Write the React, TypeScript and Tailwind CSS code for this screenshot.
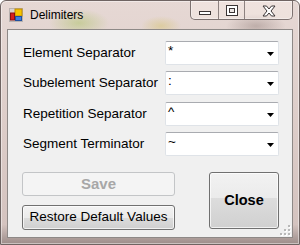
import React from "react";

const rows = [
  { label: "Element Separator", value: "*", mt: "mt-0" },
  { label: "Subelement Separator", value: ":", mt: "mt-[6px]" },
  { label: "Repetition Separator", value: "^", mt: "mt-[7px]" },
  { label: "Segment Terminator", value: "~", mt: "mt-[6px]" },
];

function AppIcon() {
  return (
    <svg width="14" height="14" viewBox="0 0 14 14">
      <rect x="0.5" y="0.5" width="13" height="13" fill="#d9d4d2" stroke="#b8b2b0" />
      <rect x="6" y="1" width="7" height="7" fill="#f5c400" stroke="#c08a00" strokeWidth="1" />
      <rect x="1.5" y="5" width="4" height="7" fill="#d62020" stroke="#8a1010" strokeWidth="1" />
      <rect x="6.5" y="8.5" width="6" height="4" fill="#3f7fe0" stroke="#2050a0" strokeWidth="1" />
    </svg>
  );
}

function CaptionButtons() {
  return (
    <div className="flex h-[19px] border border-t-0 border-[#7d7270] rounded-b-[5px] bg-[rgba(255,245,242,0.35)] shadow-[inset_0_0_0_1px_rgba(255,255,255,0.35)] overflow-hidden">
      <div className="w-[28px] h-full flex items-center justify-center border-r border-[#8d8280]">
        <svg width="14" height="6" viewBox="0 0 14 6" className="mt-[6px]">
          <rect x="1.5" y="1.5" width="11" height="3" fill="#fff" stroke="#3b3535" strokeWidth="1" />
        </svg>
      </div>
      <div className="w-[26px] h-full flex items-center justify-center border-r border-[#8d8280]">
        <svg width="12" height="11" viewBox="0 0 12 11" className="mt-[1px]">
          <rect x="0.5" y="0.5" width="11" height="10" fill="#fff" stroke="#3b3535" />
          <rect x="3.5" y="3.5" width="5" height="4" fill="#ece6e4" stroke="#3b3535" />
        </svg>
      </div>
      <div className="w-[47px] h-full flex items-center justify-center">
        <svg width="14" height="12" viewBox="0 0 14 12" className="mt-[1px]">
          <path
            d="M1 1 L4.5 1 L7 4 L9.5 1 L13 1 L9 6 L13 11 L9.5 11 L7 8 L4.5 11 L1 11 L5 6 Z"
            fill="#fff"
            stroke="#3b3535"
            strokeWidth="1"
            strokeLinejoin="round"
          />
        </svg>
      </div>
    </div>
  );
}

function Combo({ value }: { value: string }) {
  return (
    <div className="w-[114px] h-[24px] bg-white border border-[#dfe3e8] border-t-[#a9abb0] rounded-[2px] flex items-start relative">
      <span className="pl-[2px] pt-[1px] text-[13.5px] leading-[16px] text-black">{value}</span>
      <svg width="7" height="4" viewBox="0 0 7 4" className="absolute right-[4px] top-[10px]">
        <path d="M0 0 L7 0 L3.5 4 Z" fill="#000" />
      </svg>
    </div>
  );
}

export default function App() {
  return (
    <div className="w-[300px] h-[245px] font-['Liberation_Sans',Arial,sans-serif] overflow-hidden">
      <div className="w-[300px] h-[245px] flex flex-col rounded-t-[6px] border border-[#6f6462] bg-[radial-gradient(ellipse_30px_14px_at_78px_22px,rgba(176,196,110,0.55),transparent),radial-gradient(ellipse_20px_10px_at_160px_25px,rgba(214,196,120,0.55),transparent),radial-gradient(ellipse_30px_12px_at_255px_25px,rgba(120,100,95,0.35),transparent),linear-gradient(180deg,#e6d8d4_0%,#ddcdc9_50%,#d4c3bf_92%,#9d8d8a_100%)] shadow-[inset_0_0_0_1px_rgba(255,255,255,0.45)]">
        <div className="h-[28px] flex items-start pl-[8px] pr-[6px]">
          <div className="mt-[7px]">
            <AppIcon />
          </div>
          <span className="ml-[7px] mt-[7px] text-[12px] leading-[15px] text-black">Delimiters</span>
          <div className="flex-1" />
          <CaptionButtons />
        </div>
        <div className="ml-[6px] mr-[6px] h-[209px] border border-[#8e8987] bg-[#f0f0f0] relative pl-[14px] pt-[11px]">
          {rows.map((r) => (
            <div key={r.label} className={`flex items-center h-[24px] ${r.mt}`}>
              <span className="w-[143px] pl-[1px] text-[13.5px] leading-[16px] text-black whitespace-nowrap">{r.label}</span>
              <Combo value={r.value} />
            </div>
          ))}
          <div className="flex mt-[16px]">
            <div className="flex flex-col w-[153px] gap-[9px]">
              <div className="h-[24px] border border-[#c3c5c7] rounded-[3px] bg-[#f4f4f4] flex items-center justify-center text-[15px] font-bold text-[#a7a7a7]">
                Save
              </div>
              <div className="h-[25px] border border-[#707070] rounded-[3px] bg-[linear-gradient(180deg,#f2f2f2_0%,#ebebeb_50%,#dddddd_50%,#cfcfcf_100%)] shadow-[inset_0_0_0_1px_rgba(255,255,255,0.7)] flex items-center justify-center text-[13.5px] text-black">
                Restore Default Values
              </div>
            </div>
            <div className="ml-[34px] w-[70px] h-[57px] border border-[#707070] rounded-[3px] bg-[linear-gradient(180deg,#f2f2f2_0%,#ebebeb_45%,#dddddd_45%,#d0d0d0_100%)] shadow-[inset_0_0_0_1px_rgba(255,255,255,0.7)] flex items-center justify-center text-[14.5px] font-bold text-black">
              Close
            </div>
          </div>
          <svg width="11" height="11" viewBox="0 0 11 11" className="absolute right-[1px] bottom-[1px]">
            {[
              [8, 0],
              [8, 4],
              [4, 4],
              [8, 8],
              [4, 8],
              [0, 8],
            ].map(([x, y]) => (
              <g key={`${x}-${y}`}>
                <rect x={x + 1} y={y + 1} width="2" height="2" fill="#fff" />
                <rect x={x} y={y} width="2" height="2" fill="#b8b8b8" />
              </g>
            ))}
          </svg>
        </div>
      </div>
    </div>
  );
}
